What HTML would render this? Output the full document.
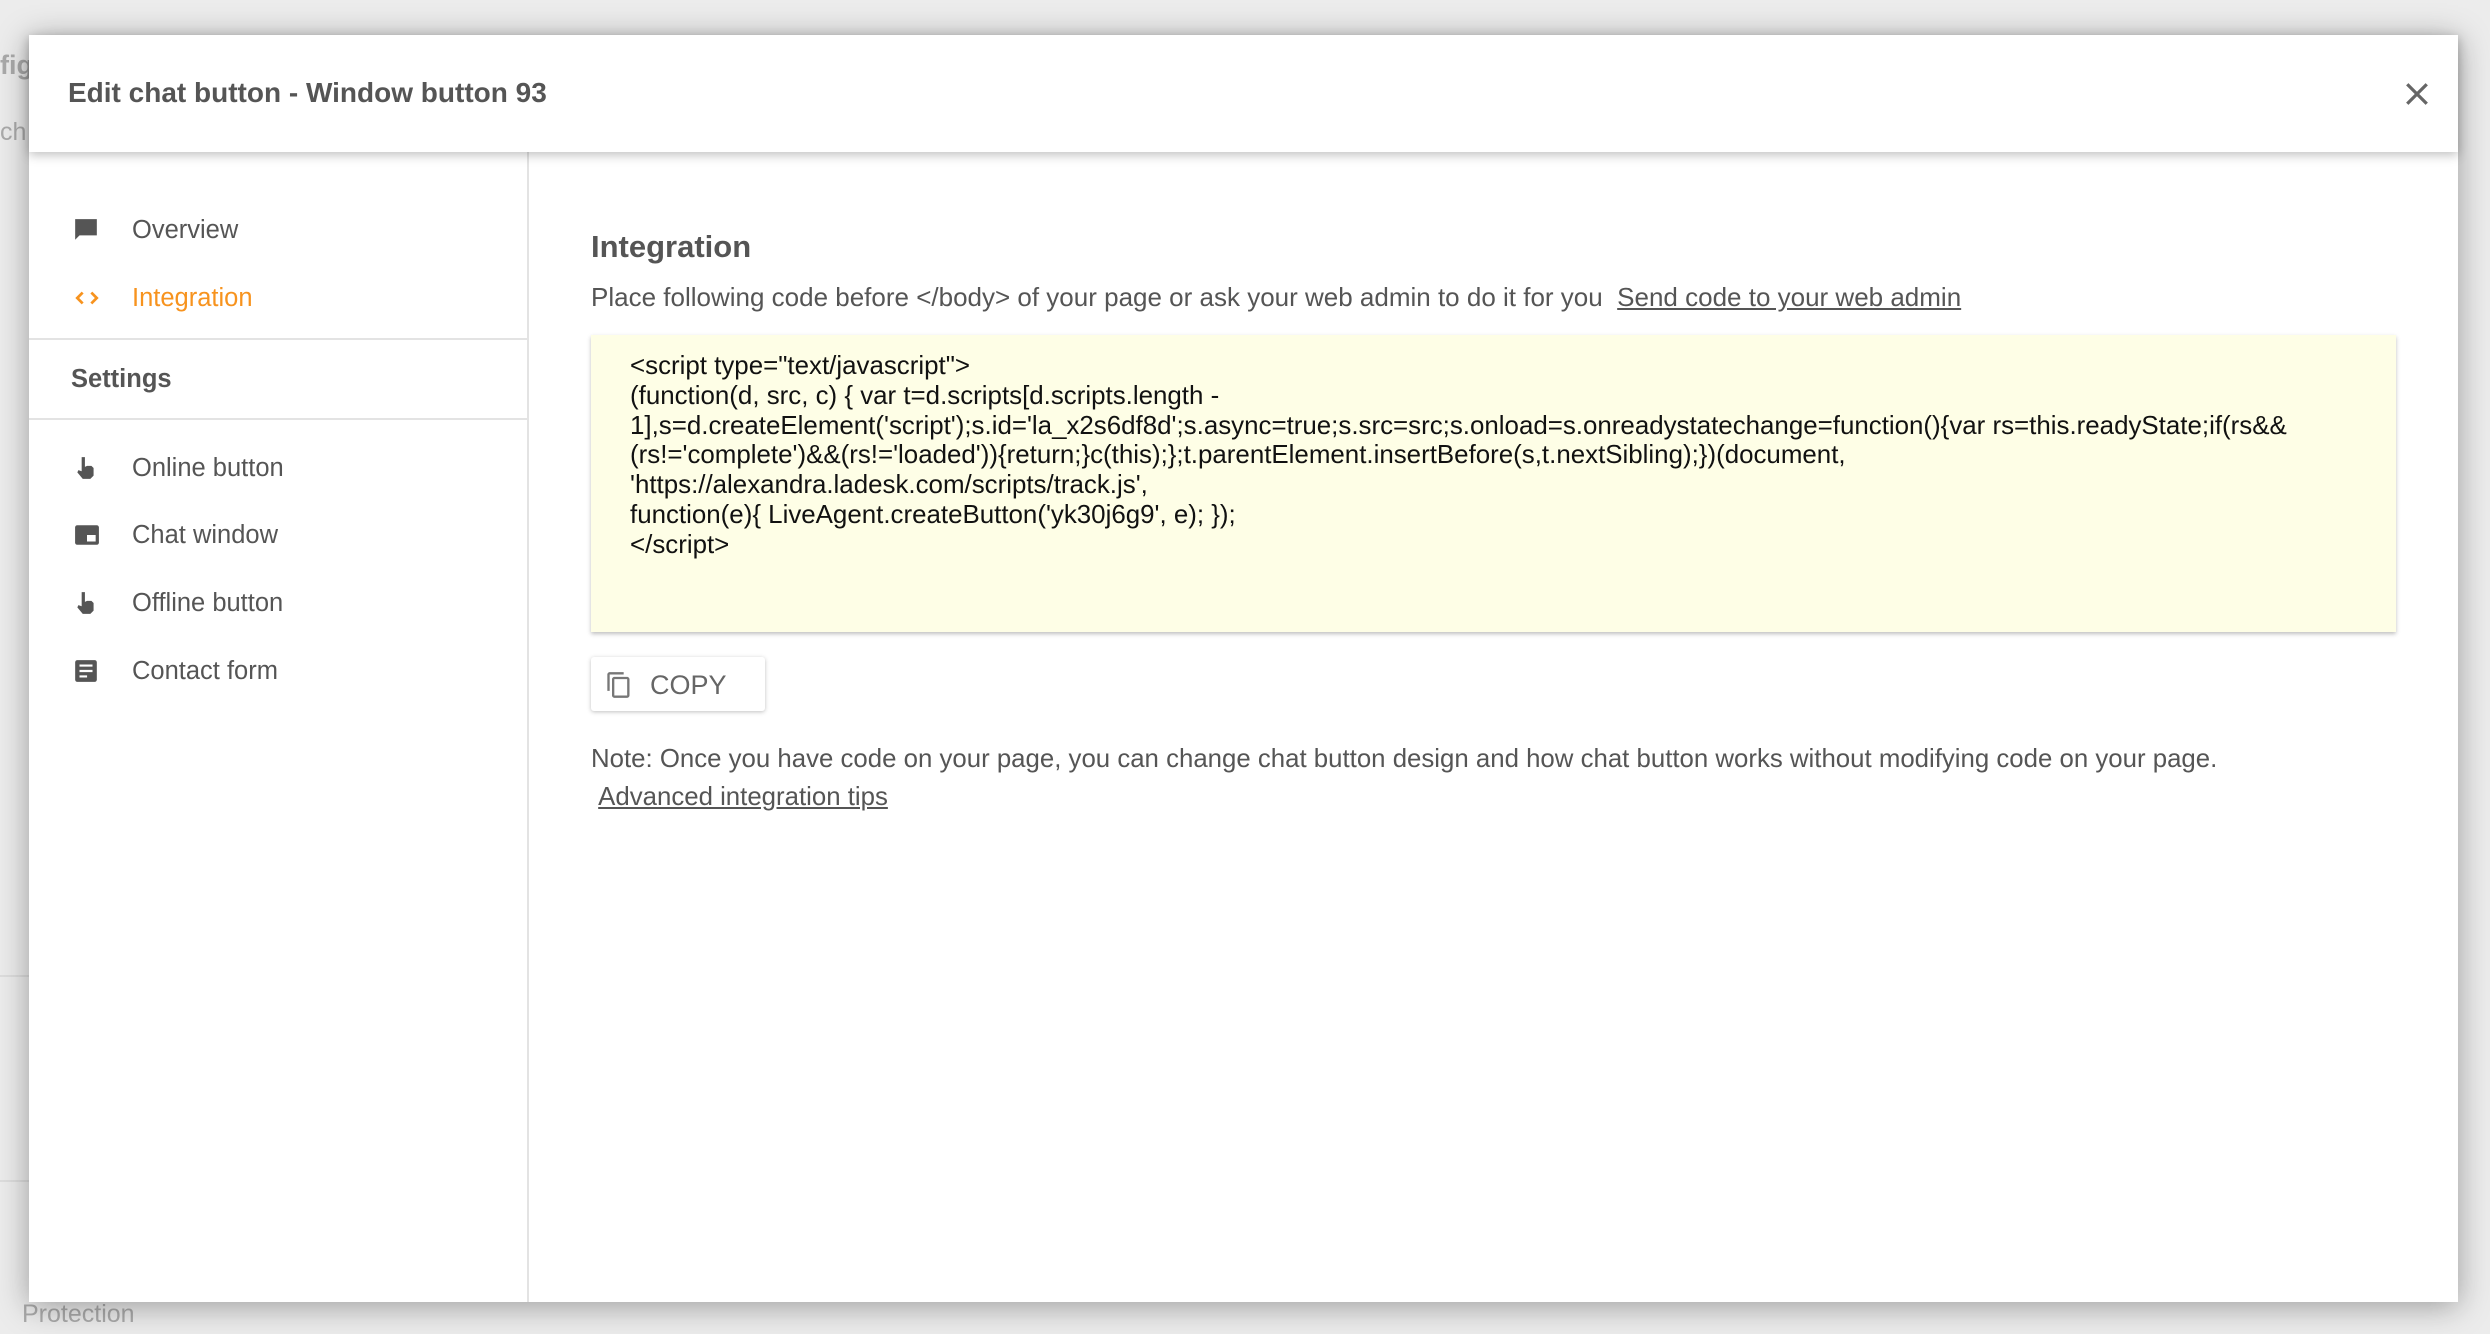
<!DOCTYPE html>
<html><head><meta charset="utf-8"><style>
*{margin:0;padding:0;box-sizing:border-box}
html,body{width:2490px;height:1334px;overflow:hidden;background:#ececec;font-family:"Liberation Sans",Arial,sans-serif}
.bg{position:absolute;color:#aaa;font-size:25px}
.modal{position:absolute;left:29px;top:35px;width:2429px;height:1267px;background:#fff;box-shadow:0 4px 30px rgba(0,0,0,.35)}
.hdr{position:absolute;left:0;top:0;width:100%;height:117px;background:#fff;box-shadow:0 3px 10px rgba(0,0,0,.25);z-index:2}
.hdr h1{position:absolute;left:39px;top:42px;font-size:28px;font-weight:bold;color:#555}
.close{position:absolute;left:2375px;top:46px;width:26px;height:26px}
.side{position:absolute;left:0;top:117px;width:500px;height:1150px;border-right:2px solid #e3e3e3}
.item{position:absolute;left:0;width:490px;height:40px;font-size:25.5px;color:#555;white-space:nowrap}
.item svg{position:absolute;left:44px;top:6px}
.item span{position:absolute;left:103px;top:5px}
.hr{position:absolute;left:0;width:500px;height:2px;background:#e3e3e3}
h2{position:absolute;left:562px;top:194px;font-size:31px;font-weight:bold;color:#555;white-space:nowrap}
.desc{position:absolute;left:562px;top:247px;font-size:26px;color:#555;white-space:nowrap}
a{color:#555;text-decoration:underline}
.code{position:absolute;left:562px;top:300px;width:1805px;height:297px;background:#fefee6;box-shadow:0 2px 4px rgba(0,0,0,.25)}
.code pre{position:absolute;left:39px;top:17px;font-family:"Liberation Sans",Arial,sans-serif;font-size:25.9px;line-height:29.8px;color:#111;white-space:pre}
.copy{position:absolute;left:562px;top:622px;width:174px;height:54px;background:#fff;box-shadow:0 1px 4px rgba(0,0,0,.25);border-radius:3px}
.copy span{position:absolute;left:59px;top:13px;font-size:27px;color:#666}
.note{position:absolute;left:562px;top:705px;font-size:25.8px;color:#555;white-space:nowrap;line-height:38px}
</style></head><body>
<div class="bg" style="left:0;top:50px;font-size:27px;font-weight:bold">fig</div>
<div class="bg" style="left:0;top:118px">ch</div>
<div class="bg" style="left:22px;top:1300px">Protection</div>
<div style="position:absolute;left:0;top:975px;width:29px;height:2px;background:#ddd"></div>
<div style="position:absolute;left:0;top:1180px;width:29px;height:2px;background:#ddd"></div>
<div class="modal">
 <div class="hdr"><h1>Edit chat button - Window button 93</h1>
  <svg class="close" viewBox="0 0 24 24"><path d="M3 3L21 21M21 3L3 21" stroke="#666" stroke-width="3"/></svg>
 </div>
 <div class="side">
  <div class="item" style="top:59px"><svg width="26" height="26" viewBox="0 0 24 24"><path d="M2 2h20v15H6l-4 4z" fill="#555"/></svg><span>Overview</span></div>
  <div class="item" style="top:127px;color:#f7931e"><svg width="28" height="26" viewBox="0 0 24 24"><path d="M8 7l-5 5 5 5M16 7l5 5-5 5" stroke="#f7931e" stroke-width="2.5" fill="none"/></svg><span>Integration</span></div>
  <div class="hr" style="top:186px"></div>
  <div class="item" style="top:208px;font-weight:bold"><span style="left:42px">Settings</span></div>
  <div class="hr" style="top:266px"></div>
  <div class="item" style="top:297px"><svg width="26" height="26" viewBox="0 0 24 24"><path d="M8 2h3v9l2-1h4l2 2v7l-3 3h-7l-5-6 1-2 3 1z" fill="#555"/></svg><span>Online button</span></div>
  <div class="item" style="top:364px"><svg width="28" height="26" viewBox="0 0 24 24"><rect x="1" y="3" width="22" height="18" rx="2" fill="#555"/><rect x="12" y="12" width="8" height="6" fill="#fff"/></svg><span>Chat window</span></div>
  <div class="item" style="top:432px"><svg width="26" height="26" viewBox="0 0 24 24"><path d="M8 2h3v9l2-1h4l2 2v7l-3 3h-7l-5-6 1-2 3 1z" fill="#555"/></svg><span>Offline button</span></div>
  <div class="item" style="top:500px"><svg width="26" height="26" viewBox="0 0 24 24"><rect x="2" y="2" width="20" height="20" rx="2" fill="#555"/><path d="M6 7h12M6 12h12M6 17h7" stroke="#fff" stroke-width="2"/></svg><span>Contact form</span></div>
 </div>
</div>
<div style="position:absolute;left:29px;top:35px">
 <h2>Integration</h2>
 <div class="desc">Place following code before &lt;/body&gt; of your page or ask your web admin to do it for you&nbsp; <a>Send code to your web admin </a></div>
 <div class="code"><pre>&lt;script type="text/javascript"&gt;
(function(d, src, c) { var t=d.scripts[d.scripts.length -
1],s=d.createElement('script');s.id='la_x2s6df8d';s.async=true;s.src=src;s.onload=s.onreadystatechange=function(){var rs=this.readyState;if(rs&amp;&amp;
(rs!='complete')&amp;&amp;(rs!='loaded')){return;}c(this);};t.parentElement.insertBefore(s,t.nextSibling);})(document,
'https://alexandra.ladesk.com/scripts/track.js',
function(e){ LiveAgent.createButton('yk30j6g9', e); });
&lt;/script&gt;</pre></div>
 <div class="copy"><svg style="position:absolute;left:14px;top:13px" width="28" height="30" viewBox="0 0 24 24"><path d="M16 1H4c-1 0-2 1-2 2v14h2V3h12z M19 5H8c-1 0-2 1-2 2v14c0 1 1 2 2 2h11c1 0 2-1 2-2V7c0-1-1-2-2-2zm0 16H8V7h11z" fill="#777"/></svg><span>COPY</span></div>
 <div class="note">Note: Once you have code on your page, you can change chat button design and how chat button works without modifying code on your page.<br>&nbsp;<a>Advanced integration tips</a></div>
</div>
</body></html>
